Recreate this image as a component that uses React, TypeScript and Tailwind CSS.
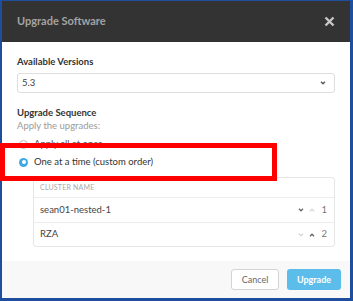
import React from 'react';

const font = { fontFamily: 'Lato, "Open Sans", sans-serif' };

function Chevron({ up, className }: { up?: boolean; className?: string }) {
  return (
    <svg width="6" height="4" viewBox="0 0 6 4" className={className}>
      <path d={up ? 'M1 3.2 L3 1.2 L5 3.2' : 'M1 0.8 L3 2.8 L5 0.8'} fill="none" stroke="currentColor" strokeWidth="1.3" />
    </svg>
  );
}

const rows = [
  { name: 'sean01-nested-1', down: true, up: false, order: 1 },
  { name: 'RZA', down: false, up: true, order: 2 },
];

export default function App() {
  return (
    <div className="relative w-[353px] h-[301px] bg-white" style={font}>
      <div className="flex flex-col w-full h-full border-t border-l-2 border-r-[3px] border-b-[3px] border-[#1d4f9e]">
        <div className="h-[41px] bg-[#333333] flex items-center justify-between pl-[15px] pr-[15px]">
          <span className="text-[11px] font-bold text-[#a3a3a3]">Upgrade Software</span>
          <svg width="11" height="11" viewBox="0 0 11 11">
            <path d="M1.5 1.5 L9.5 9.5 M9.5 1.5 L1.5 9.5" stroke="#c8c8c8" strokeWidth="2.4" />
          </svg>
        </div>

        <div className="flex-1 flex flex-col px-[15px] pt-[14px]">
          <div className="text-[9.5px] leading-[12px] font-bold text-[#333]">Available Versions</div>
          <div className="mt-[5px] h-[20px] border border-[#dedede] rounded-[3px] flex items-center justify-between px-[4px] pr-[8px]">
            <span className="text-[9.5px] text-[#444]">5.3</span>
            <Chevron className="text-[#555]" />
          </div>

          <div className="mt-[14px] text-[9.5px] leading-[12px] font-bold text-[#333]">Upgrade Sequence</div>
          <div className="mt-[1px] text-[9.5px] leading-[12px] text-[#9a9a9a]">Apply the upgrades:</div>

          <div className="mt-[6px] h-[12px] flex items-center gap-[6px] pl-[2px]">
            <span className="w-[9px] h-[9px] rounded-full border border-[#bbb]" />
            <span className="text-[9.5px] text-[#555]">Apply all at once</span>
          </div>
          <div className="mt-[6px] h-[12px] flex items-center gap-[6px] pl-[2px]">
            <span className="w-[9px] h-[9px] rounded-full bg-[#3fa9e6] flex items-center justify-center">
              <span className="w-[4px] h-[4px] rounded-full bg-white" />
            </span>
            <span className="text-[9.5px] text-[#333]">One at a time (custom order)</span>
          </div>

          <div className="mt-[9px] ml-[16px] border border-[#e6e6e6] rounded-[3px] flex flex-col">
            <div className="h-[20px] flex items-center px-[6px] border-b border-[#ececec]">
              <span className="text-[7px] text-[#aaa] tracking-[0.2px]">CLUSTER NAME</span>
            </div>
            {rows.map((r, i) => (
              <div
                key={r.name}
                className={`flex items-center justify-between px-[6px] pr-[7px] ${i === 0 ? 'h-[25px] border-b border-[#ececec]' : 'h-[23px]'}`}
              >
                <span className="text-[9.5px] text-[#444]">{r.name}</span>
                <div className="flex items-center gap-[5px]">
                  <Chevron className={r.down ? 'text-[#666]' : 'text-[#d6d6d6]'} />
                  <Chevron up className={r.up ? 'text-[#666]' : 'text-[#d6d6d6]'} />
                  <span className="text-[9.5px] text-[#777] ml-[1px]">{r.order}</span>
                </div>
              </div>
            ))}
          </div>
        </div>

        <div className="h-[37px] bg-[#f8f8f8] flex items-center justify-end gap-[8px] pr-[9px]">
          <button className="w-[48px] h-[21px] rounded-[3px] border border-[#d4d4d4] bg-white text-[9px] text-[#666]">
            Cancel
          </button>
          <button className="w-[54px] h-[21px] rounded-[3px] bg-[#5cbdea] text-[9px] font-bold text-white">
            Upgrade
          </button>
        </div>
      </div>

      <div className="absolute left-0 top-[143px] w-[277px] h-[38px] border-[5px] border-[#ff0000]" />
    </div>
  );
}
